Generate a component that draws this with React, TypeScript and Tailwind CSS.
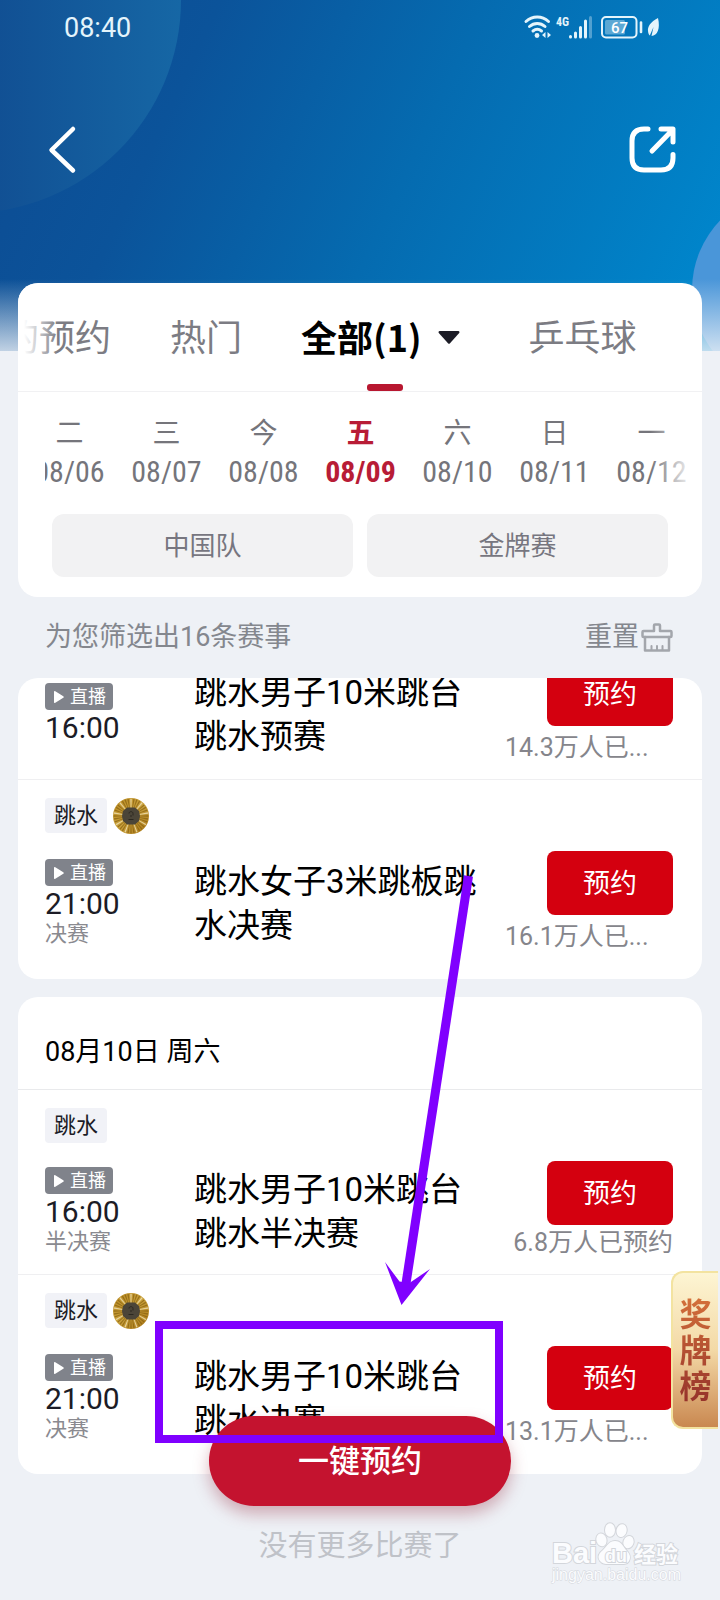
import { useId } from 'react'

type Match = {
  id: string
  sport: string
  medal: boolean
  time: string
  stage?: string
  title: string[]
  booked: string
}

const days = [
  { label: '二', date: '08/06' },
  { label: '三', date: '08/07' },
  { label: '今', date: '08/08' },
  { label: '五', date: '08/09', active: true },
  { label: '六', date: '08/10' },
  { label: '日', date: '08/11' },
  { label: '一', date: '08/12' },
]

const friday: Match[] = [
  {
    id: 'fri-1600',
    sport: '跳水',
    medal: false,
    time: '16:00',
    title: ['跳水男子10米跳台', '跳水预赛'],
    booked: '14.3万人已...',
  },
  {
    id: 'fri-2100',
    sport: '跳水',
    medal: true,
    time: '21:00',
    stage: '决赛',
    title: ['跳水女子3米跳板跳', '水决赛'],
    booked: '16.1万人已...',
  },
]

const saturday: Match[] = [
  {
    id: 'sat-1600',
    sport: '跳水',
    medal: false,
    time: '16:00',
    stage: '半决赛',
    title: ['跳水男子10米跳台', '跳水半决赛'],
    booked: '6.8万人已预约',
  },
  {
    id: 'sat-2100',
    sport: '跳水',
    medal: true,
    time: '21:00',
    stage: '决赛',
    title: ['跳水男子10米跳台', '跳水决赛'],
    booked: '13.1万人已...',
  },
]

function HeaderBackground() {
  return (
    <div className="absolute inset-x-0 top-0 h-[351px] overflow-hidden bg-[linear-gradient(115deg,#0d4b92_0%,#0b539a_25%,#056bb0_55%,#0086cc_95%)]">
      <div className="absolute -top-[213px] -left-[245px] size-[426px] rounded-full bg-linear-to-r from-[#114f93] from-55% to-[#1667a5]" />
      <div className="absolute top-[190px] -right-[172px] size-[200px] rounded-full bg-[#4a96d9]" />
      <div className="absolute inset-x-0 bottom-0 h-[72px] bg-linear-to-b from-transparent to-[#eef2f7]/80" />
    </div>
  )
}

function StatusBar() {
  return (
    <div className="flex h-[54px] items-center justify-between pr-[59px] pl-16 text-[#e4f4fb]">
      <span className="pt-[2px] text-[27px] leading-8">08:40</span>
      <svg width="138" height="28" viewBox="523 12 138 28" fill="none" aria-hidden="true">
        <g stroke="currentColor" strokeWidth="3" strokeLinecap="round">
          <path d="M526 20.500c6.500-6 16-6 22.500 0" />
          <path d="M529.500 25.500c4.500-4 11-4 15.500 0" />
          <path d="M533 30c2.500-2 6-2 8.500 0" />
        </g>
        <circle cx="537" cy="34.500" r="2.400" fill="currentColor" />
        <path d="M545.500 31v6l-3.500-3zM547.500 31v6l3.500-3z" fill="currentColor" />
        <text x="556" y="25" fill="currentColor" fontSize="12" fontWeight="700" fontFamily="Roboto Condensed, Roboto, sans-serif">4G</text>
        <g stroke="currentColor" strokeWidth="3" strokeLinecap="round">
          <path d="M570.500 35.500v.5M575.500 32v4M580.500 26.500v9.500M585.500 20v16" />
          <path d="M590.500 16.500v19.500" opacity="0.350" />
        </g>
        <rect x="602" y="16" width="34.500" height="20.500" rx="4" stroke="currentColor" strokeWidth="2" />
        <rect x="605" y="19" width="20" height="14.500" rx="1.500" fill="currentColor" opacity="0.400" />
        <text x="611" y="32" fill="#fff" fontSize="15" fontWeight="500" fontFamily="Roboto, sans-serif">67</text>
        <path d="M641 21.500v9.500" stroke="currentColor" strokeWidth="2.600" strokeLinecap="round" />
        <path d="M658 17c-7.500 4-10.500 8.500-10 13 .2 2 .8 3.500 1.800 4.600l3.700-8.600-2 9c6-.2 9-7.500 6.500-18z" fill="currentColor" />
      </svg>
    </div>
  )
}

function MedalIcon() {
  const gold = useId()
  const rays = Array.from({ length: 36 }, (_, i) => i * 10)
  return (
    <svg width="36" height="36" viewBox="0 0 36 36" aria-hidden="true">
      <defs>
        <linearGradient id={gold} x1="0" y1="0" x2="1" y2="1">
          <stop offset="0" stopColor="#b98a22" />
          <stop offset="0.5" stopColor="#c9a13c" />
          <stop offset="1" stopColor="#a87412" />
        </linearGradient>
      </defs>
      <circle cx="18" cy="18" r="18" fill={`url(#${gold})`} />
      {rays.map((angle, i) => (
        <path
          key={angle}
          d="M18 18 17.300 .8h1.400z"
          transform={`rotate(${angle} 18 18)`}
          fill={i % 4 === 0 ? '#f6ecc8' : '#86600f'}
          opacity="0.7"
        />
      ))}
      <path d="M14 9.500h8l4 3.500 1 5-1 5-4 3.500h-8L10 23l-1-5 1-5z" fill="#4b4538" />
      <path d="M16 15.500c0-2.500 4-2.500 4 0v2M18 17v2M15.500 21.500h5" stroke="#2c2820" fill="none" />
    </svg>
  )
}

function BrushIcon() {
  return (
    <svg width="32" height="30" viewBox="0 0 32 30" fill="none" stroke="#a3a6ac" strokeWidth="2.500" strokeLinejoin="round" strokeLinecap="round" aria-hidden="true">
      <path d="M13 2.500q0-1 1-1h4q1 0 1 1V8h10.500q1 0 1 1v4q0 1-1 1h-27q-1 0-1-1V9q0-1 1-1H13z" />
      <path d="M4 14v13.500h24V14" />
      <path d="M10.500 27v-4M16 27v-4M21.500 27v-4" strokeWidth="2" />
    </svg>
  )
}

function Tabs() {
  return (
    <nav className="relative overflow-hidden rounded-t-[20px] border-b border-[#f1f1f3]">
      <div className="-ml-[51px] flex h-[108px] gap-[59px] text-[36px] leading-[54px] whitespace-nowrap text-[#7c7c83]">
        <button type="button" className="pt-[3px]">我的预约</button>
        <button type="button" className="pt-[3px]">热门</button>
        <button
          type="button"
          className="relative flex shrink-0 items-center gap-4 pr-[10px] font-bold text-black"
        >
          <span className="pb-[3px] font-['Noto_Sans_CJK_SC',sans-serif]">全部(1)</span>
          <svg width="22" height="13" viewBox="0 0 22 13" aria-hidden="true">
            <path d="M1.500 0h19q1.500.5.700 2L12 12.300q-1 1-2 0L.8 2Q0 .5 1.500 0z" fill="#1c1c26" />
          </svg>
          <span className="absolute bottom-0 left-1/2 h-[7px] w-9 -translate-x-1/2 rounded-[3px] bg-[#b81730]" />
        </button>
        <button type="button" className="pt-[3px]">乒乓球</button>
      </div>
      <div className="absolute inset-y-0 left-0 w-10 bg-linear-to-r from-white from-15% to-transparent" />
    </nav>
  )
}

function DayPicker() {
  return (
    <div className="relative mr-4 ml-[27px] overflow-hidden pt-[22px]">
      <div className="-ml-6 flex">
        {days.map((day) => (
          <button
            key={day.date}
            type="button"
            className={
              day.active
                ? 'w-[97px] shrink-0 font-bold text-[#b81c36]'
                : 'w-[97px] shrink-0 text-[#75757b]'
            }
          >
            <span className="block text-[28px] leading-10">{day.label}</span>
            <span className="block font-['Liberation_Sans_Narrow','Roboto_Condensed',Roboto,sans-serif] text-[30px] leading-9">
              {day.date}
            </span>
          </button>
        ))}
      </div>
      <div className="absolute inset-y-0 right-0 w-9 bg-linear-to-l from-white/80 to-transparent" />
    </div>
  )
}

function MatchRow({ match }: { match: Match }) {
  const truncated = match.booked.endsWith('...')
  return (
    <li className="border-b border-[#efeff1] pt-[18px] pr-[29px] pb-[13px] pl-[27px] last:border-b-0 last:pb-6">
      <div className="flex h-[35px] items-center gap-[6px]">
        <span className="rounded bg-[#f1f2f7] px-[9px] text-[22px] leading-[35px] text-[#1c1c26]">
          {match.sport}
        </span>
        {match.medal && <MedalIcon />}
      </div>
      <div className="mt-[18px] flex items-center">
        <div className="w-[149px] shrink-0">
          <span className="flex h-[27px] w-[68px] items-center gap-[6px] rounded bg-[#80838b] pl-[9px] text-[18px] text-white">
            <svg width="10" height="12" viewBox="0 0 10 12" aria-hidden="true">
              <path d="M0 1q0-1.500 1.300-.7l8 4.900q1 .8 0 1.600l-8 4.900Q0 12.500 0 11z" fill="currentColor" />
            </svg>
            直播
          </span>
          <p className="text-[30px] leading-[35px] text-[#1c1c26]">{match.time}</p>
          {match.stage && <p className="text-[22px] leading-[26px] text-[#8a8a90]">{match.stage}</p>}
        </div>
        <h3 className="flex-1 pt-[2px] text-[33px] leading-[44px] whitespace-nowrap text-black">
          {match.title.map((line) => (
            <span key={line} className="block">{line}</span>
          ))}
        </h3>
        <div className="flex w-[168px] shrink-0 flex-col items-end">
          <button type="button" className="h-16 w-[126px] rounded-lg bg-[#d4000f] pt-[2px] text-[27px] text-white">
            预约
          </button>
          <p
            className={
              truncated
                ? 'w-full pt-1 text-[25px] leading-[36px] text-[#85858b]'
                : 'text-[25px] leading-[36px] whitespace-nowrap text-[#85858b]'
            }
          >
            {match.booked}
          </p>
        </div>
      </div>
    </li>
  )
}

function MedalBoardLink() {
  const label = ['奖', '牌', '榜']
  return (
    <a
      href="#medals"
      className="absolute top-[1271px] right-[2px] flex h-[158px] w-[47px] flex-col items-center rounded-l-xl border-2 border-r-0 border-[#f3e3a0] bg-linear-to-b from-[#fdf5d3] via-[#f3d9a6] to-[#c98850] pt-6"
    >
      <span className="flex flex-col bg-linear-to-b from-[#d4703a] to-[#94302a] bg-clip-text text-[32px] leading-9 font-bold text-transparent">
        {label.map((char) => (
          <span key={char}>{char}</span>
        ))}
      </span>
    </a>
  )
}

function Watermark() {
  return (
    <svg className="absolute top-[1520px] right-[38px]" width="132" height="70" viewBox="550 1518 132 70" role="img" aria-label="Baidu 经验">
      <g fill="#fbfcfe" stroke="#d3d6db" strokeWidth="2" paintOrder="stroke" fontFamily="Liberation Sans, Noto Sans CJK SC, sans-serif">
        <text x="552" y="1561" fontSize="29" fontWeight="700">Bai</text>
        <ellipse cx="601.500" cy="1538" rx="5" ry="6.500" transform="rotate(-15 601 1538)" />
        <ellipse cx="610" cy="1528" rx="5" ry="6.800" />
        <ellipse cx="621.500" cy="1528.500" rx="5" ry="6.500" transform="rotate(12 621 1529)" />
        <ellipse cx="628.500" cy="1540" rx="5" ry="6.300" transform="rotate(20 628 1540)" />
        <path d="M615 1539c6 0 8 5 11 9 4 4 5 7 3 11s-7 3-14 3-12 1-15-3-1-8 3-11c4-4 6-9 12-9z" />
        <text x="605" y="1560" fontSize="18" fontWeight="700">du</text>
        <text x="634" y="1560" fontSize="22" fontWeight="700">经验</text>
        <text x="552" y="1578" fontSize="16" strokeWidth="1">jingyan.baidu.com</text>
      </g>
    </svg>
  )
}

// hand-drawn hint pointing at the final
function Annotation() {
  return (
    <>
      <div className="pointer-events-none absolute top-[1321px] left-[155px] h-[122px] w-[348px] border-8 border-[#8000ff]" />
      <svg className="pointer-events-none absolute top-[870px] left-[380px]" width="100" height="440" viewBox="380 870 100 440" aria-hidden="true">
        <path d="M468.500 876 405 1290" stroke="#8000ff" strokeWidth="9" />
        <path d="M401.500 1305 385 1262l14.500 19.500 10 1.500 20.500-14z" fill="#8000ff" />
      </svg>
    </>
  )
}

export default function App() {
  return (
    <div className="relative min-h-screen bg-[#eef1f6] font-[Roboto,'Noto_Sans_CJK_SC',sans-serif]">
      <HeaderBackground />

      <div className="relative">
        <StatusBar />

        <header className="flex h-[229px] items-start justify-between px-[43px] pt-[71px] text-white">
          <button type="button" aria-label="返回">
            <svg width="38" height="50" viewBox="0 0 38 50" fill="none" stroke="currentColor" strokeWidth="4.500" strokeLinecap="round" strokeLinejoin="round" aria-hidden="true">
              <path d="M30 4 8.500 25 30 45.500" />
            </svg>
          </button>
          <button type="button" aria-label="分享">
            <svg width="49" height="50" viewBox="0 0 49 50" fill="none" stroke="currentColor" strokeWidth="5" strokeLinecap="round" strokeLinejoin="round" aria-hidden="true">
              <path d="M20 4h-4Q4 4 4 16v17q0 12 12 12h17q12 0 12-12v-3.500" />
              <path d="M24 26 44 5.500M33 4h12v13" />
            </svg>
          </button>
        </header>

        <main className="px-[18px] pb-8">
          <section className="rounded-[20px] bg-white pb-5">
            <Tabs />
            <DayPicker />
            <div className="mt-6 grid grid-cols-2 gap-[14px] px-[34px]">
              <button type="button" className="h-[63px] rounded-xl bg-[#f2f2f3] pt-[2px] text-[26px] text-[#77767f]">
                中国队
              </button>
              <button type="button" className="h-[63px] rounded-xl bg-[#f2f2f3] pt-[2px] text-[26px] text-[#77767f]">
                金牌赛
              </button>
            </div>
          </section>

          <div className="flex h-[81px] items-center justify-between pr-[29px] pl-[27px] text-[27px] text-[#84878e]">
            <p>为您筛选出16条赛事</p>
            <button type="button" className="flex items-center gap-[2px]">
              重置
              <BrushIcon />
            </button>
          </div>

          {/* scrolled list, the first match sits partly above the edge */}
          <section className="overflow-hidden rounded-[20px] bg-white">
            <ul className="-mt-[87px]">
              {friday.map((match) => (
                <MatchRow key={match.id} match={match} />
              ))}
            </ul>
          </section>

          <section className="mt-[18px] rounded-[20px] bg-white">
            <h2 className="border-b border-[#e9eaec] px-[27px] pt-[18px] text-[27px] leading-[74px] text-black">
              08月10日 周六
            </h2>
            <ul>
              {saturday.map((match) => (
                <MatchRow key={match.id} match={match} />
              ))}
            </ul>
          </section>

          <p className="mt-[52px] text-center text-[29px] leading-10 text-[#bfc2c8]">没有更多比赛了</p>
        </main>
      </div>

      <button
        type="button"
        className="absolute top-[1416px] left-1/2 h-[90px] w-[302px] -translate-x-1/2 rounded-full bg-[#c4132f] pt-[2px] text-[31px] font-medium text-white shadow-[0_8px_16px_rgba(150,40,60,0.35)]"
      >
        一键预约
      </button>

      <MedalBoardLink />
      <Watermark />
      <Annotation />
    </div>
  )
}
